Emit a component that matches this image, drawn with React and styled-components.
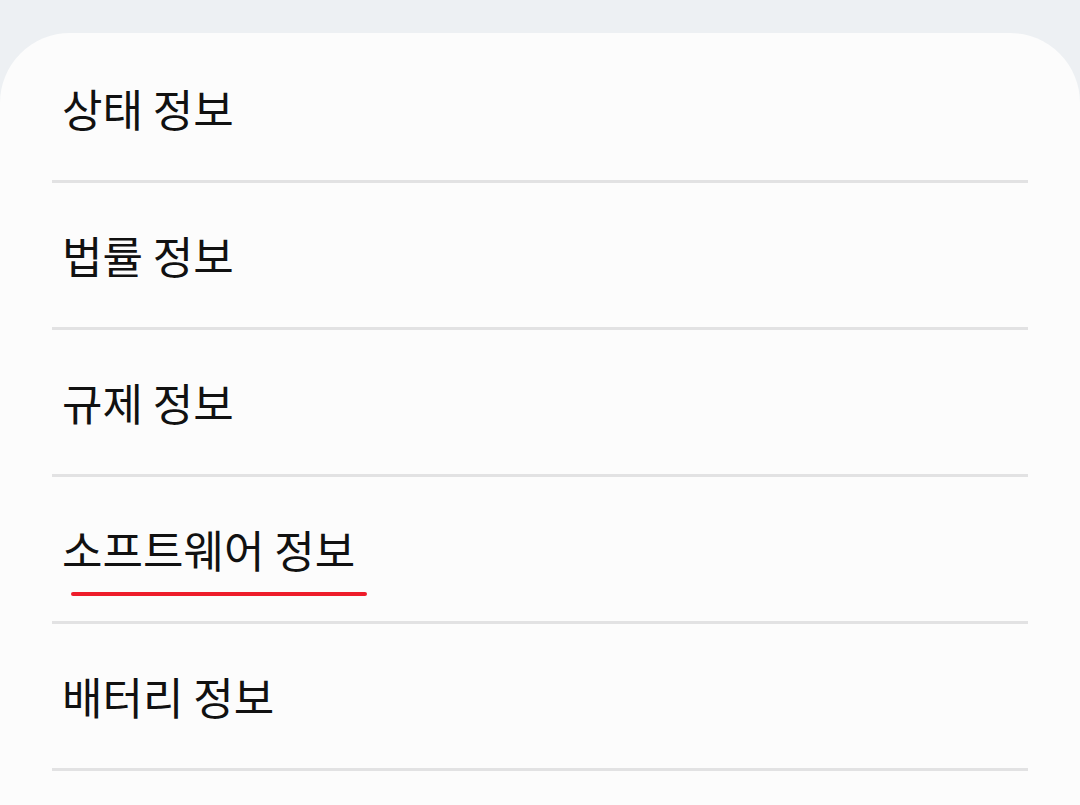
import React from 'react'
import styled, { createGlobalStyle } from 'styled-components'

const Global = createGlobalStyle`
    html, body {
        margin: 0;
        padding: 0;
        background: #edf0f3;
        font-family: "Noto Sans CJK KR", "Noto Sans", sans-serif;
    }
`

const Page = styled.div`
    width: 1080px;
    height: 805px;
    overflow: hidden;
    padding-top: 33px;
    box-sizing: border-box;
`

const Card = styled.div`
    background: #fcfcfc;
    border-radius: 70px 70px 0 0;
    padding: 3px 52px 0;
    min-height: 772px;
    box-sizing: border-box;
`

const Row = styled.div`
    height: 144px;
    border-bottom: 3px solid #e2e2e3;
    display: flex;
    align-items: center;
    padding-left: 10px;
`

const Label = styled.span`
    position: relative;
    font-size: 44px;
    color: #111;
    line-height: 1;
`

const Marker = styled.span`
    position: absolute;
    left: 9px;
    right: -12px;
    top: 65px;
    height: 4px;
    border-radius: 2px;
    background: #ee1c2a;
`

const items = ['상태 정보', '법률 정보', '규제 정보', '소프트웨어 정보', '배터리 정보']

const App = () => {
    return (
        <Page>
            <Global />
            <Card>
                {items.map((name, i) => (
                    <Row key={name}>
                        <Label>
                            {name}
                            {i === 3 && <Marker />}
                        </Label>
                    </Row>
                ))}
            </Card>
        </Page>
    )
}

export default App
